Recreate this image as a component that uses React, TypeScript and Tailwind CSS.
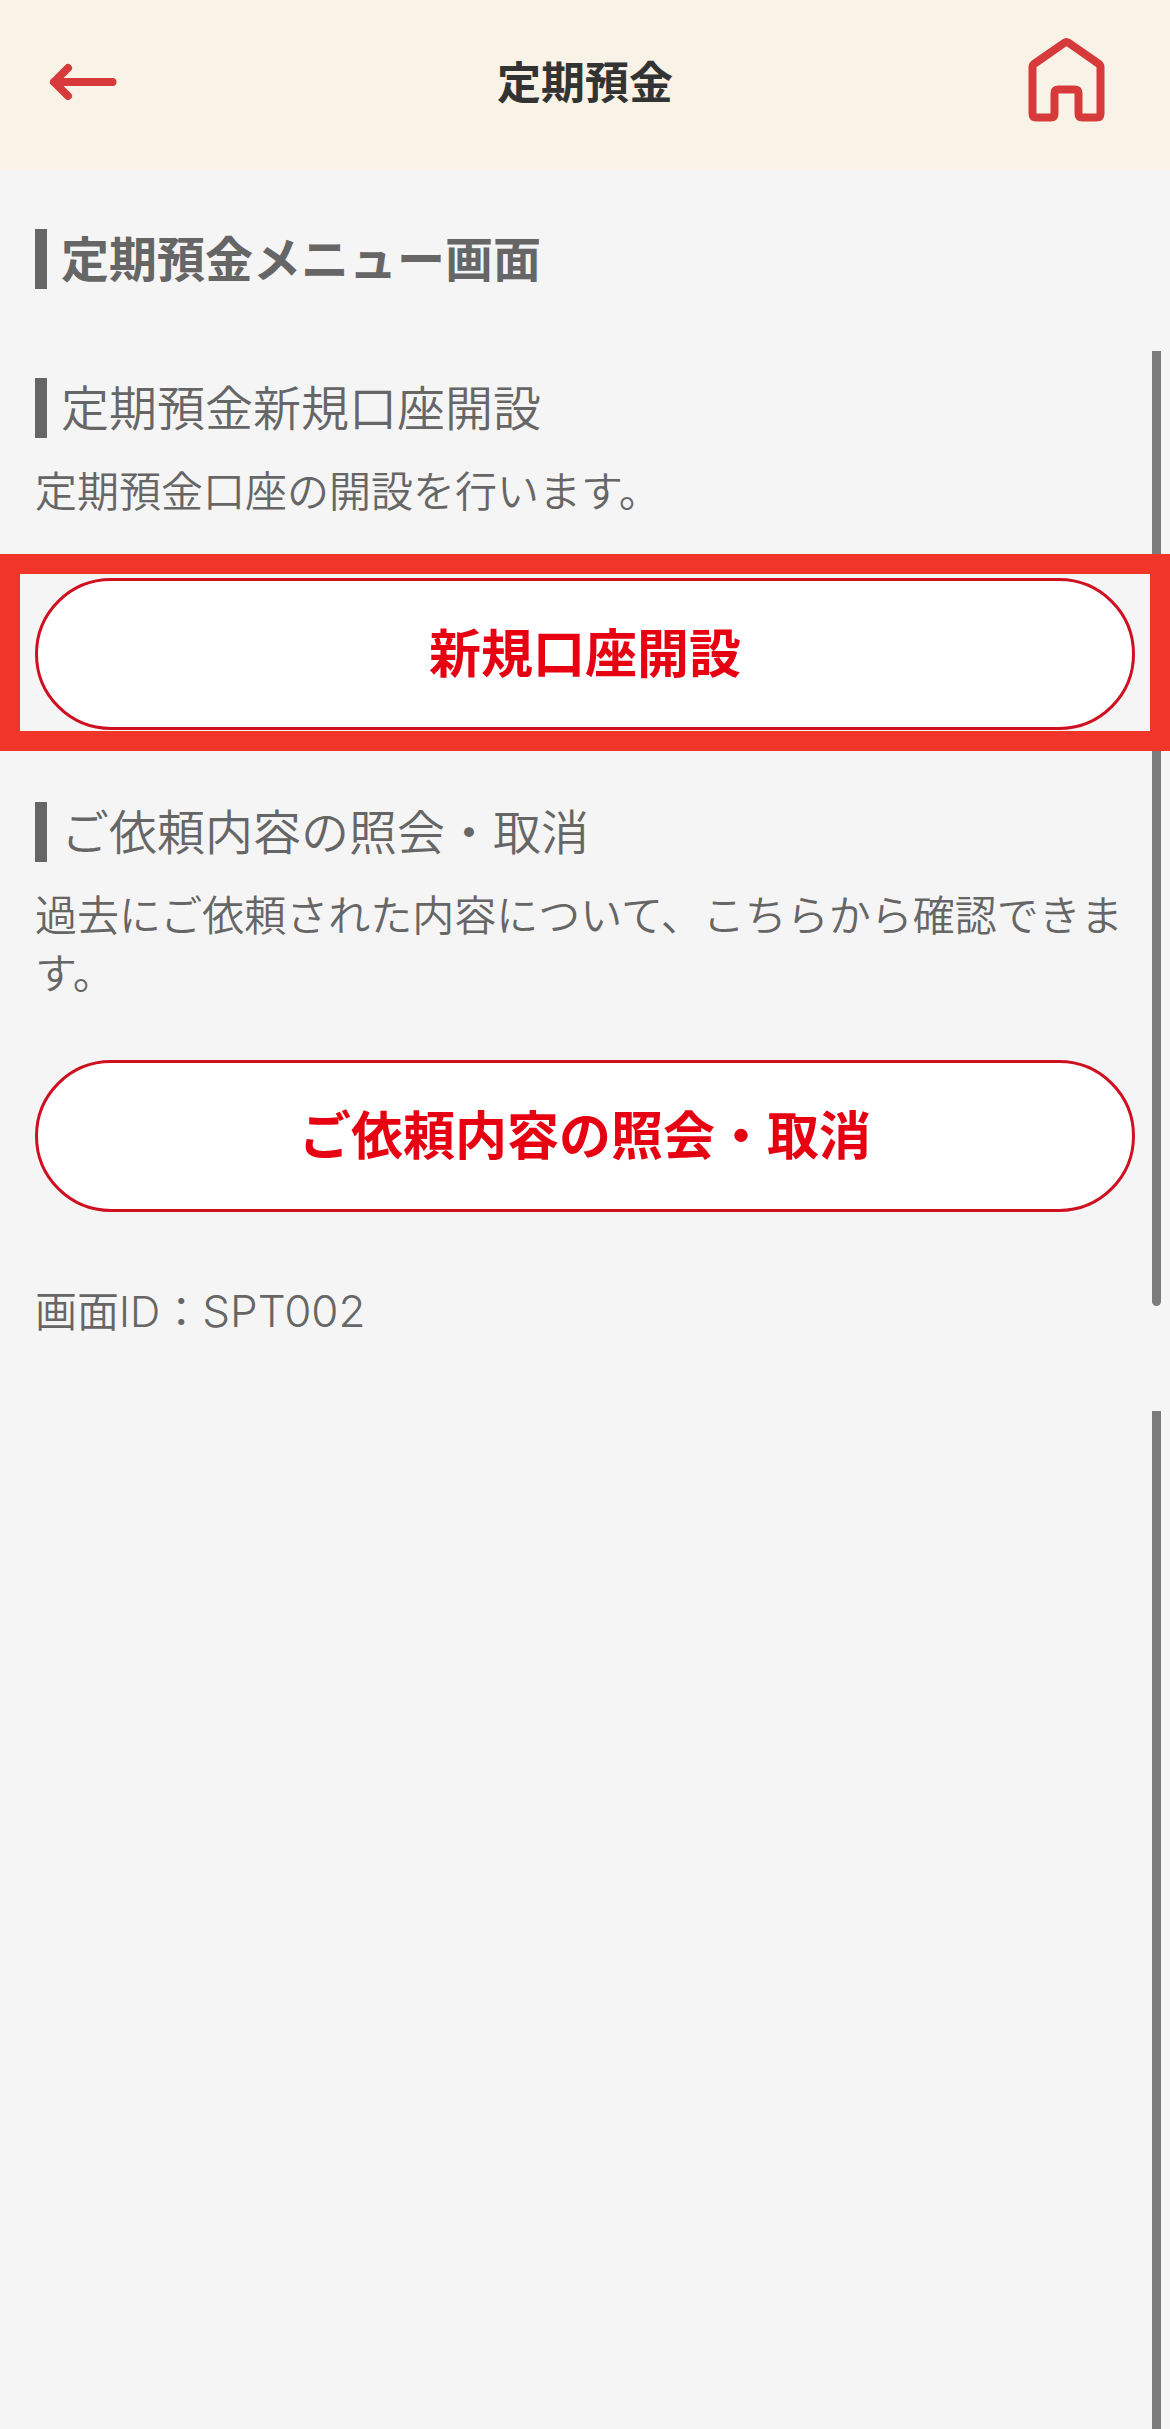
import React from 'react';

interface MenuSection {
  title: string;
  description: string;
  action: string;
  highlighted?: boolean;
}

const sections: MenuSection[] = [
  {
    title: '定期預金新規口座開設',
    description: '定期預金口座の開設を行います。',
    action: '新規口座開設',
    highlighted: true,
  },
  {
    title: 'ご依頼内容の照会・取消',
    description: '過去にご依頼された内容について、こちらから確認できます。',
    action: 'ご依頼内容の照会・取消',
  },
];

const App: React.FC = () => {
  return (
    <div className="relative min-h-screen bg-[#f5f5f5] font-['Inter','Noto_Sans_CJK_JP',sans-serif] font-[350] text-[#666]">
      {/* Header */}
      <header className="grid h-[169px] grid-cols-[1fr_auto_1fr] items-center bg-[#f9f2e6] px-12 pb-[5px]">
        <button aria-label="戻る" className="justify-self-start text-[#d63a3a]">
          <svg className="h-[40px] w-[70px]" viewBox="0 0 70 40" fill="none" stroke="currentColor" strokeWidth="8" strokeLinecap="round" strokeLinejoin="round">
            <path d="M64.5 20H6M20 6L6 20l14 14" />
          </svg>
        </button>
        <h1 className="pt-0.5 text-[44px] font-bold text-[#333]">定期預金</h1>
        <button aria-label="ホーム" className="mr-[14px] justify-self-end text-[#d63a3a]">
          <svg className="h-[88px] w-[84px]" viewBox="0 0 84 88" fill="none" stroke="currentColor" strokeWidth="8" strokeLinejoin="round">
            <path d="M40.5 4.8q2-1.4 4 0l30 20.8q2 1.4 2 4v46q0 4-4 4h-14q-4 0-4-4v-20q0-4-4-4h-16q-4 0-4 4v20q0 4-4 4h-14q-4 0-4-4v-46q0-2.6 2-4z" />
          </svg>
        </button>
      </header>

      {/* Scroll indicators */}
      <div className="absolute top-[351px] right-[9px] h-[955px] w-[9px] rounded-b-full bg-[#7b7b7b]" />
      <div className="absolute top-[1411px] right-[9px] bottom-0 w-[9px] bg-[#7b7b7b]" />

      <main className="pt-[60px]">
        <h2 className="mx-[35px] flex h-[60px] items-center border-l-[12px] border-[#666] pt-0.5 pl-[14px] text-[48px] font-bold">定期預金メニュー画面</h2>

        {sections.map((section, index) => (
          <section key={section.title} className={index === 0 ? 'pt-[89px]' : 'pt-[51px]'}>
            <h3 className="mx-[35px] flex h-[60px] items-center border-l-[12px] border-[#666] pt-0.5 pl-[14px] text-[48px]">{section.title}</h3>
            <p className="mx-[35px] mt-[25px] text-[42px] leading-[58px]">{section.description}</p>
            <div className={section.highlighted ? 'relative mt-[33px] border-20 border-[#f23529] px-[15px] pt-1 pb-px' : 'mt-[57px] px-[35px]'}>
              <button className="block h-[152px] w-full rounded-full border-3 border-[#cf1020] bg-white pt-0.5 text-[52px] font-bold text-[#e60012]">{section.action}</button>
            </div>
          </section>
        ))}

        <p className="mx-[35px] mt-[70px] text-[42px] leading-[58px]">
          画面ID：<span className="text-[44px]">SPT002</span>
        </p>
      </main>
    </div>
  );
};

export default App;
